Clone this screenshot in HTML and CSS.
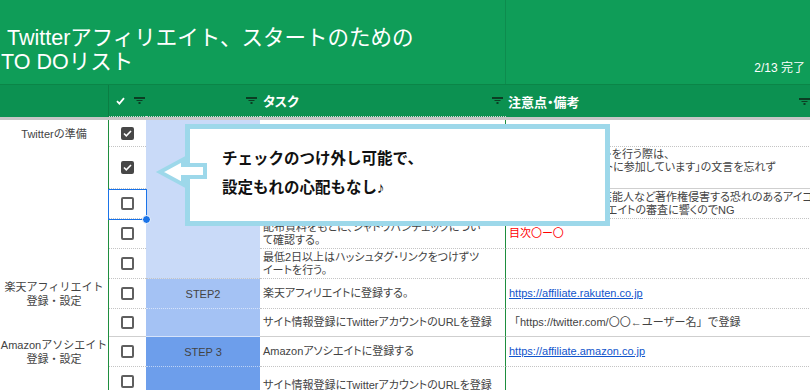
FILE: index.html
```html
<!DOCTYPE html>
<html lang="ja">
<head>
    <meta charset="UTF-8">
    <title>Twitterアフィリエイト TO DOリスト</title>
    <link rel="stylesheet" href="styles.css">
</head>
<body>
<div class="banner">
    <div class="banner-title">&nbsp;Twitterアフィリエイト、スタートのための<br>TO DOリスト</div>
    <div class="banner-side">2/13 完了</div>
</div>

<!-- 列見出し -->
<div class="colhead">
    <div class="hc hc-a"></div>
    <div class="hc hc-b">
        <svg class="tick" width="9" height="8" viewBox="0 0 9 8"><path d="M1 4.2l2.4 2.4L8 1.2"/></svg>
        <svg class="filter" width="11" height="7" viewBox="0 0 11 7"><path d="M0 0h11v2H0zM2.5 3h6v1h-6zM4.5 5h2v2h-2z"/></svg>
    </div>
    <div class="hc hc-c">
        <svg class="filter" width="11" height="7" viewBox="0 0 11 7"><path d="M0 0h11v2H0zM2.5 3h6v1h-6zM4.5 5h2v2h-2z"/></svg>
    </div>
    <div class="hc hc-d">
        <span>タスク</span>
        <svg class="filter" width="11" height="7" viewBox="0 0 11 7"><path d="M0 0h11v2H0zM2.5 3h6v1h-6zM4.5 5h2v2h-2z"/></svg>
    </div>
    <div class="hc hc-e">
        <span>注意点・備考</span>
        <svg class="filter" width="11" height="7" viewBox="0 0 11 7"><path d="M0 0h11v2H0zM2.5 3h6v1h-6zM4.5 5h2v2h-2z"/></svg>
    </div>
</div>
<div class="freeze"></div>

<div class="sheet">
    <!-- 1 -->
    <div class="cell col-a">Twitterの準備</div>
    <div class="cell col-b"><span class="cb on"><svg width="9" height="7" viewBox="0 0 9 7"><path d="M1 3.5l2.3 2.3L8 1"/></svg></span></div>
    <div class="cell col-c step-1"></div>
    <div class="cell col-d"></div>
    <div class="cell col-e"></div>
    <!-- 2 -->
    <div class="cell col-a"></div>
    <div class="cell col-b"><span class="cb on"><svg width="9" height="7" viewBox="0 0 9 7"><path d="M1 3.5l2.3 2.3L8 1"/></svg></span></div>
    <div class="cell col-d"></div>
    <div class="cell col-e sect">商品紹介のリツイートを行う際は、<br>「Amazonアソシエイトに参加しています」の文言を忘れず<br>に記載する。</div>
    <!-- 3 -->
    <div class="cell col-a"></div>
    <div class="cell col-b"><span class="cb"></span></div>
    <div class="cell col-d"></div>
    <div class="cell col-e">プロフィール画像に芸能人など著作権侵害する恐れのあるアイコ<br>ンを載せるとアフィリエイトの審査に響くのでNG</div>
    <!-- 4 -->
    <div class="cell col-a"></div>
    <div class="cell col-b"><span class="cb"></span></div>
    <div class="cell col-d">配布資料をもとに、シャドウバンチェックについ<br>て確認する。</div>
    <div class="cell col-e warn">目次〇ー〇</div>
    <!-- 5 -->
    <div class="cell col-a"></div>
    <div class="cell col-b"><span class="cb"></span></div>
    <div class="cell col-d">最低2日以上はハッシュタグ・リンクをつけずツ<br>イートを行う。</div>
    <div class="cell col-e"></div>
    <!-- 6 -->
    <div class="cell col-a">楽天アフィリエイト<br>登録・設定</div>
    <div class="cell col-b"><span class="cb"></span></div>
    <div class="cell col-c step-2">STEP2</div>
    <div class="cell col-d">楽天アフィリエイトに登録する。</div>
    <div class="cell col-e"><a href="#">https://affiliate.rakuten.co.jp</a></div>
    <!-- 7 -->
    <div class="cell col-a"></div>
    <div class="cell col-b sect"><span class="cb"></span></div>
    <div class="cell col-c step-2 sect"></div>
    <div class="cell col-d sect">サイト情報登録にTwitterアカウントのURLを登録</div>
    <div class="cell col-e sect nopalt">「https://twitter.com/〇〇←ユーザー名」で登録</div>
    <!-- 8 -->
    <div class="cell col-a">Amazonアソシエイト<br>登録・設定</div>
    <div class="cell col-b"><span class="cb"></span></div>
    <div class="cell col-c step-3">STEP 3</div>
    <div class="cell col-d">Amazonアソシエイトに登録する</div>
    <div class="cell col-e"><a href="#">https://affiliate.amazon.co.jp</a></div>
    <!-- 9 -->
    <div class="cell col-a"></div>
    <div class="cell col-b last"><span class="cb"></span></div>
    <div class="cell col-c step-3"></div>
    <div class="cell col-d last">サイト情報登録にTwitterアカウントのURLを登録</div>
    <div class="cell col-e"></div>

    <div class="selection"></div>
</div>

<!-- 吹き出し -->
<div class="callout">チェックのつけ外し可能で、<br>設定もれの心配もなし♪</div>
<svg class="callout-arrow" width="64" height="44" viewBox="0 0 64 44">
    <path d="M10 22L33 9.5V15H55V27H33V34.5Z"/>
</svg>
</body>
</html>
```

FILE: styles.css
```css
body {
    margin: 0;
    width: 810px;
    height: 390px;
    overflow: hidden;
    position: relative;
    background: #fff;
    color: #434343;
    font-family: "Liberation Sans", Arial, "Noto Sans CJK JP", sans-serif;
}

/* タイトル帯 */
.banner {
    display: flex;
    height: 84px;
    background: #0f9d58;
    color: #fff;
}
.banner-title {
    width: 506px;
    box-sizing: border-box;
    border-right: 1px solid #0d8c4e;
    padding: 26px 0 0 1px;
    font-size: 21.5px;
    line-height: 24px;
}
.banner-side {
    flex: 1;
    display: flex;
    align-items: flex-end;
    justify-content: flex-end;
    padding: 0 5px 9px 0;
    font-size: 12px;
}

/* 列見出し */
.colhead {
    display: grid;
    grid-template-columns: 109px 37px 114px 246px 305px;
    height: 33px;
    box-sizing: border-box;
    border-top: 1px solid #0b8547;
    background: #0c9151;
    color: #fff;
    font-size: 13px;
    font-weight: bold;
    font-feature-settings: "palt";
}
.hc {
    display: flex;
    align-items: center;
    box-sizing: border-box;
    border-bottom: 1px dotted #d6d6d6;
}
.hc-a {
    border-right: 1px solid #0a7e43;
    border-bottom: none;
}
.hc-b {
    padding-left: 7px;
    gap: 9px;
}
.hc-c {
    justify-content: flex-end;
    padding-right: 3px;
}
.hc-d {
    justify-content: space-between;
    padding: 0 3px 0 3px;
}
.hc-e {
    justify-content: space-between;
    padding: 0 1px 0 2px;
    border-bottom: none;
}
.tick path {
    fill: none;
    stroke: #fff;
    stroke-width: 1.8;
}
.filter path {
    fill: #0c3d23;
}
.freeze {
    height: 3px;
    background: #c6c6c6;
}

/* シート本体 */
.sheet {
    position: relative;
    display: grid;
    grid-template-columns: 109px 37px 114px 246px 305px;
    grid-template-rows: 27px 42px 30px 30px 30px 30px 28px 30px 46px;
    font-size: 11px;
}
.cell {
    display: flex;
    align-items: center;
    box-sizing: border-box;
    min-width: 0;
    border-bottom: 1px dotted #c4c4c4;
    white-space: nowrap;
}
.col-a {
    grid-column: 1;
    justify-content: center;
    text-align: center;
    line-height: 14px;
    border-bottom: none;
    border-right: 1px solid #1e8e3e;
}
.col-b {
    grid-column: 2;
    justify-content: center;
}
.col-c {
    grid-column: 3;
    justify-content: center;
}
.col-d {
    grid-column: 4;
    padding-left: 3px;
    line-height: 13px;
    border-right: 1px solid #1e8e3e;
    font-feature-settings: "palt";
}
.col-e {
    grid-column: 5;
    padding-left: 3px;
    line-height: 13px;
    font-feature-settings: "palt";
}
.col-e a {
    color: #1155cc;
}
.nopalt {
    font-feature-settings: normal;
}
.warn {
    color: #ff0000;
}
.sect {
    border-bottom: 1px solid #cfcfcf;
}
.last {
    align-items: flex-start;
    padding-top: 12px;
}
.col-b.last {
    padding-top: 8px;
}
.step-1 {
    grid-row: span 5;
    background: #c9daf8;
}
.step-2 {
    background: #a4c2f4;
    border-bottom-color: rgba(255, 255, 255, 0.55);
}
.step-3 {
    background: #6d9eeb;
    border-bottom-color: rgba(255, 255, 255, 0.55);
}

/* チェックボックス */
.cb {
    width: 13px;
    height: 13px;
    box-sizing: border-box;
    border: 2px solid #5f5f5f;
    border-radius: 2px;
    background: #fff;
    display: flex;
    align-items: center;
    justify-content: center;
}
.cb.on {
    background: #474747;
    border-color: #474747;
}
.cb svg path {
    fill: none;
    stroke: #fff;
    stroke-width: 1.6;
}

/* 選択中のセル */
.selection {
    position: absolute;
    left: 108px;
    top: 69px;
    width: 39px;
    height: 31px;
    box-sizing: border-box;
    border: 1px solid #1a73e8;
}
.selection::after {
    content: "";
    position: absolute;
    right: -5px;
    bottom: -5px;
    width: 7px;
    height: 7px;
    border-radius: 50%;
    background: #1a73e8;
    border: 1px solid #fff;
}

/* 吹き出し */
.callout {
    position: absolute;
    left: 185px;
    top: 124px;
    width: 425px;
    height: 102px;
    box-sizing: border-box;
    border: 5px solid #9dd8ea;
    background: #fff;
    padding: 15px 0 0 32px;
    color: #111;
    font-size: 15.5px;
    font-weight: bold;
    line-height: 29px;
}
.callout-arrow {
    position: absolute;
    left: 150px;
    top: 150px;
}
.callout-arrow path {
    fill: #fff;
    stroke: #9dd8ea;
    stroke-width: 4;
}
```
